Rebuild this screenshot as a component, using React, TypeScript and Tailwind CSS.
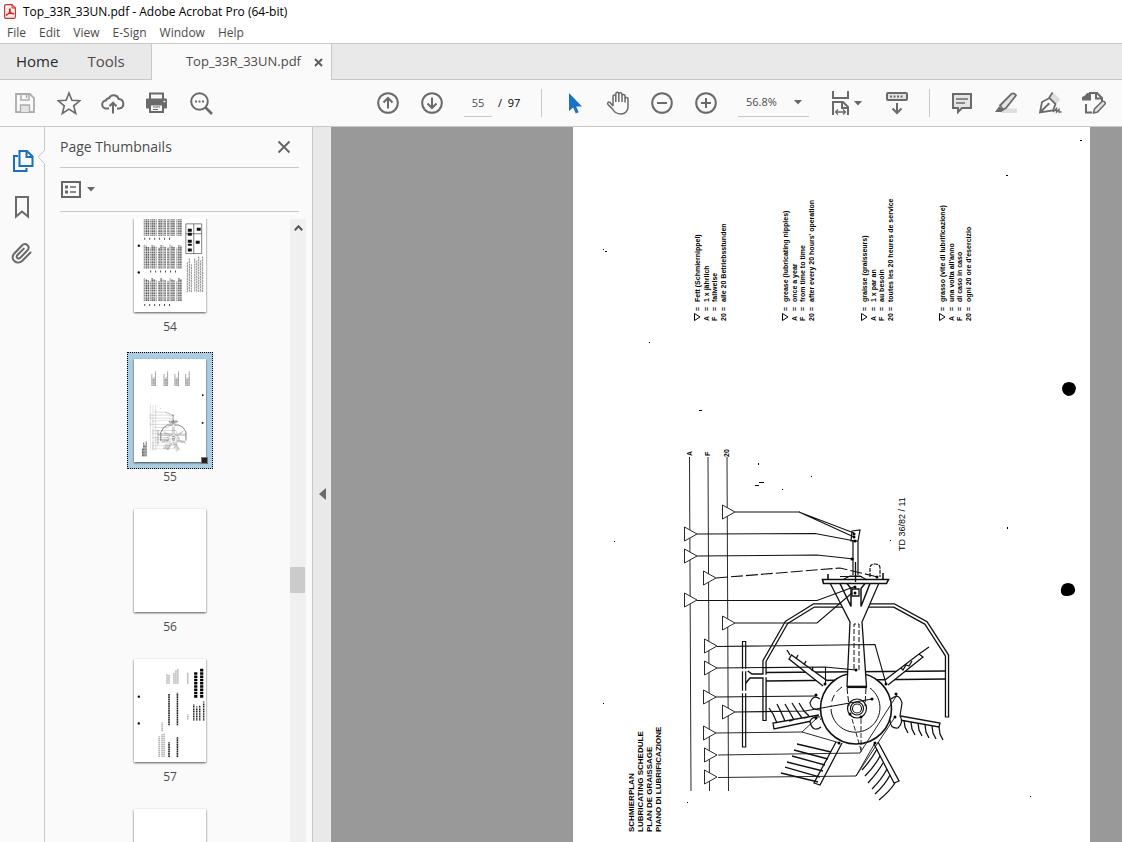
import React from "react";
import clsx from "clsx";

const MENUS = ["File", "Edit", "View", "E-Sign", "Window", "Help"];

// [left edge, centre] of every grease mark on the A / F / 20 lines
const MARKS = [
  [722, 512], [684, 534], [684, 556], [703, 578], [684, 600], [722, 623], [704, 646],
  [704, 668], [703, 697], [722, 712], [703, 733], [704, 755], [704, 777],
];

const LEGENDS = [
  { x: 700, lines: ["Fett (Schmiernippel)", "1 x jährlich", "fallweise", "alle 20 Betriebsstunden"] },
  { x: 788, lines: ["grease (lubricating nipples)", "once a year", "from time to time", "after every 20 hours' operation"] },
  { x: 867, lines: ["graisse (graisseurs)", "1 x par an", "au besoin", "toutes les 20 heures de service"] },
  { x: 945, lines: ["grasso (vite di lubrificazione)", "una volta all'anno", "di caso in caso", "ogni 20 ore d'esercizio"] },
];

const TITLES = ["SCHMIERPLAN", "LUBRICATING SCHEDULE", "PLAN DE GRAISSAGE", "PIANO DI LUBRIFICAZIONE"];

export default function App() {
  return (
    <div className="flex h-screen flex-col overflow-hidden bg-[#fafafa] font-['Open_Sans','Noto_Sans',sans-serif] text-[#4b4b4b] select-none">
      <TitleBar />
      <TabBar />
      <Toolbar />
      <div className="flex min-h-0 flex-1">
        <NavRail />
        <ThumbnailPanel />
        <button aria-label="Collapse panel" className="flex w-[19px] shrink-0 items-center justify-center border-l border-[#c8c8c8] bg-[#e9e9e9] pt-[18px]">
          <svg width="7" height="12" viewBox="0 0 7 12" fill="#6b6b6b"><path d="M7 0v12L0 6z" /></svg>
        </button>
        <main className="flex min-w-0 flex-1 justify-end overflow-hidden bg-[#999] pr-8">
          <article className="w-[517px] shrink-0 bg-white">
            <svg className="block w-full" viewBox="573 127 517 731">
              <PlanDrawing />
              <PlanText />
            </svg>
          </article>
        </main>
      </div>
    </div>
  );
}

function TitleBar() {
  return (
    <header className="shrink-0 bg-white">
      <div className="flex h-[22px] items-center gap-[7px] pt-px pl-1 text-xs text-black">
        <svg width="12" height="15" viewBox="0 0 12 15" fill="none">
          <path d="M.6 2Q.6.6 2 .6h6l3.400 3.400v9q0 1.400-1.400 1.400H2Q.6 14.400.6 13z" fill="#fff0ee" stroke="#c9302c" strokeWidth="1.1" />
          <path d="M8 .6V4h3.400" stroke="#c9302c" />
          <path d="M2.500 11.300c2-.8 4-4.500 3.700-6.300-.9-.6-1 1 0 2.600.9 1.600 2.600 2.500 3.500 2.300.4-1-4.500-.9-7.200.500z" stroke="#d8201c" strokeWidth="1.200" />
        </svg>
        <h1>Top_33R_33UN.pdf - Adobe Acrobat Pro (64-bit)</h1>
      </div>
      <nav className="flex h-[21px] items-center gap-[13px] pl-[7px] text-xs">
        {MENUS.map((m) => <button key={m}>{m}</button>)}
      </nav>
    </header>
  );
}

function TabBar() {
  return (
    <div className="flex h-[37px] shrink-0 border-t border-[#c8c8c8] bg-[#e9e9e9]">
      <div className="flex w-[152px] items-center gap-[29px] border-r border-b border-[#c8c8c8] pl-4 text-[15px]">
        <button className="text-[#2b2b2b]">Home</button>
        <button>Tools</button>
      </div>
      <div className="flex w-[179px] items-center justify-end gap-[13px] bg-[#fafafa] pr-2">
        <button className="text-[13px]">Top_33R_33UN.pdf</button>
        <button aria-label="Close tab">
          <svg width="9" height="9" viewBox="0 0 9 9" stroke="#5f5f5f" strokeWidth="2"><path d="M1 1l7 7M8 1L1 8" /></svg>
        </button>
      </div>
      <div className="flex-1 border-b border-l border-[#c8c8c8]" />
    </div>
  );
}

function Caret({ className }: { className?: string }) {
  return <svg className={className} width="8" height="5" viewBox="0 0 8 5" fill="#666"><path d="M0 0h8L4 4.500z" /></svg>;
}

function ToolButton({ label, width = "w-11", faded = false, children }: { label: string; width?: string; faded?: boolean; children: React.ReactNode }) {
  return (
    <button aria-label={label} className={clsx("flex h-11 shrink-0 items-center justify-center", width, faded ? "text-[#acacac]" : "text-[#6a6a6a]")}>
      <svg width="24" height="24" viewBox="0 0 24 24" fill="none" stroke="currentColor" strokeWidth="2">{children}</svg>
    </button>
  );
}

function Toolbar() {
  return (
    <div className="flex h-[47px] shrink-0 items-center overflow-hidden border-b border-[#c8c8c8] pl-[3px] text-xs">
      <ToolButton label="Save" faded>
        <path d="M3 3h14l4 4v14H3z" strokeWidth="1.800" />
        <path d="M8 3v6h8V3M13.500 4v3" strokeWidth="1.500" />
        <path d="M7.500 21v-7h9v7" strokeWidth="1.300" fill="#e4e4e4" />
      </ToolButton>
      <ToolButton label="Star">
        <path d="M12 2l2.900 7.300 7.900.5-6.100 5 2 7.700L12 18.200l-6.700 4.300 2-7.700-6.100-5 7.900-.5z" strokeWidth="1.600" />
      </ToolButton>
      <ToolButton label="Share file">
        <path d="M8 17.500H5.500a4 4 0 0 1-.6-8A3.200 3.200 0 0 1 8 7.200 5.200 5.200 0 0 1 17.700 8a4.800 4.800 0 0 1 .8 9.500H16" />
        <path d="M12 22.500V12M8.500 15.200L12 11.700l3.500 3.500" />
      </ToolButton>
      <ToolButton label="Print">
        <path d="M4 1.500h15v6H4zM2 7.500h19q1 0 1 1v8q0 1-1 1H2q-1 0-1-1v-8q0-1 1-1z" fill="currentColor" stroke="none" />
        <path d="M6 3.500h11v4H6z" fill="#fafafa" stroke="none" />
        <path d="M5 13.500h13v7.500H5z" fill="#fafafa" />
        <path d="M8 16h7M8 18.500h5" strokeWidth="1" />
        <path d="M18.500 10.500h2" stroke="#fafafa" strokeWidth="1.200" />
      </ToolButton>
      <ToolButton label="Find">
        <circle cx="10.500" cy="10.500" r="8.300" /><path d="M16.500 16.500l6.500 6.500" strokeWidth="2.600" />
        <path d="M6 10.500h2M9.500 10.500h2M13 10.500h2" />
      </ToolButton>
      <div className="w-[143px] shrink-0" />
      <ToolButton label="Previous page">
        <circle cx="12" cy="12" r="9.800" /><path d="M12 17.500V7M7.500 11.500L12 7l4.500 4.500" />
      </ToolButton>
      <ToolButton label="Next page">
        <circle cx="12" cy="12" r="9.800" /><path d="M12 6.500V17M7.500 12.500L12 17l4.500-4.500" />
      </ToolButton>
      <input aria-label="Page number" defaultValue="55" className="ml-[10px] h-[27px] w-7 shrink-0 border-b border-[#c8c8c8] bg-transparent text-center text-[11px] outline-none" />
      <span className="ml-[6px] w-[43px] shrink-0 text-[11px] whitespace-pre text-black">/  97</span>
      <Divider />
      <ToolButton label="Select">
        <path d="M7 2v18l4.200-3.500 2.500 6 3-1.300-2.500-5.700H20z" fill="#1b72c4" stroke="none" />
      </ToolButton>
      <ToolButton label="Pan">
        <path d="M7 15V5.500c0-2 2.800-2 2.800 0V11M9.800 6V3c0-2.200 3-2.200 3 0v8M12.800 3.500c0-2.200 3.200-2.200 3.200 0V11M16 5c0-2 3-2 3 0v6.500M19 8c0-2 3-2 3 0v8c0 4-3 7-7 7-4.500 0-6.500-1.500-8.500-5L2 13.500c-1.200-2 .8-3.200 2-2L7 15" strokeWidth="1.500" />
      </ToolButton>
      <ToolButton label="Zoom out"><circle cx="12" cy="12" r="9.800" /><path d="M7 12h10" /></ToolButton>
      <ToolButton label="Zoom in"><circle cx="12" cy="12" r="9.800" /><path d="M7 12h10M12 7v10" /></ToolButton>
      <div className="ml-[10px] flex h-[27px] w-[71px] shrink-0 items-center border-b border-[#c8c8c8] pl-2">
        <select aria-label="Zoom level" className="min-w-0 flex-1 appearance-none bg-transparent text-[11px] outline-none">
          <option>56.8%</option>
        </select>
        <Caret className="mr-[7px]" />
      </div>
      <button aria-label="Page fit" className="ml-5 flex h-11 w-[34px] shrink-0 items-center gap-px">
        <svg width="24" height="24" viewBox="0 0 24 24" fill="none" stroke="#6a6a6a" strokeWidth="2">
          <path d="M4 0v7h15V0" />
          <path d="M4 24V11h10l5 5v8M13 11v6h6" />
          <path d="M7 21h9M9 18.500L6.500 21 9 23.500M14 18.500l2.500 2.500-2.500 2.500" strokeWidth="1.300" />
        </svg>
        <Caret />
      </button>
      <ToolButton label="Read mode" width="ml-3 w-11">
        <rect x="2" y="2" width="20" height="7" rx="1" fill="#e4e4e4" />
        <path d="M5 5.500h2M8.500 5.500h2M12 5.500h2M15.500 5.500h2" />
        <path d="M12 12v10M7.500 17.500L12 22l4.500-4.500" />
      </ToolButton>
      <div className="w-[10px] shrink-0" />
      <Divider />
      <ToolButton label="Comment">
        <path d="M3 3h18v14h-9l-4 4v-4H3z" fill="#e4e4e4" /><path d="M6 8h12M6 12h9" strokeWidth="1.300" />
      </ToolButton>
      <ToolButton label="Highlight">
        <path d="M11 17.500h12V22H7z" fill="#dedede" stroke="none" />
        <path d="M6 14.500L17.500 2.800q3-1.200 4.500 1.700L12 17l-3 1.500z" fill="#e4e4e4" strokeWidth="1.800" />
        <path d="M5 15.500l4.500 4L7.500 21H1z" fill="currentColor" stroke="none" />
      </ToolButton>
      <ToolButton label="Sign">
        <path d="M12 6l3-5 7.500 7.500-4.500 4.500z" fill="#dedede" stroke="none" />
        <path d="M2 21.500L4 11l7.500-4 6 6-2.500 6.500zM2 21.500l8-8M11 7l3.500-5.500" strokeWidth="1.800" />
        <circle cx="10.500" cy="13" r="1.200" fill="currentColor" stroke="none" />
        <path d="M15 21l3.500-3.500v3.500l2.500-2.500V21h2.500" strokeWidth="1.400" />
      </ToolButton>
      <ToolButton label="Edit">
        <path d="M7 2h8l5 5v3.500M14 2v5.500h6M4 13v8.500h6" />
        <path d="M0 6l3-1.500L5 2h4v7.500H0z" fill="currentColor" stroke="none" />
        <path d="M11.500 22l1-4 8-8q2.500.3 3 2.500l-8 8.500z" fill="#e4e4e4" strokeWidth="1.500" />
      </ToolButton>
    </div>
  );
}

function Divider() {
  return <div className="mr-[10px] h-7 w-px shrink-0 bg-[#c8c8c8]" />;
}

function NavRail() {
  return (
    <nav className="flex w-[45px] shrink-0 flex-col border-r border-[#c8c8c8] pt-[10px]">
      <button aria-label="Page Thumbnails" className="relative flex h-[47px] items-center pl-[11px]">
        <svg width="24" height="24" viewBox="0 0 24 24" fill="none" stroke="#1b6fc0" strokeWidth="2">
          <path d="M8.500 2h7.500l5.500 5.500V17h-13zM15.500 2v6h6" /><path d="M7 7H3v15h12.500v-3" />
        </svg>
        <svg className="absolute top-3 -right-px" width="8" height="16" viewBox="0 0 8 16" fill="#fafafa" stroke="#c8c8c8">
          <path d="M8 1L1 8l7 7" />
        </svg>
      </button>
      <button aria-label="Bookmarks" className="flex h-[46px] items-center pl-[10px]">
        <svg width="24" height="24" viewBox="0 0 24 24" fill="none" stroke="#6a6a6a" strokeWidth="2"><path d="M6 2h12v19.500l-6-5-6 5z" /></svg>
      </button>
      <button aria-label="Attachments" className="flex h-[46px] items-center pl-[10px]">
        <svg width="24" height="24" viewBox="0 0 24 24" fill="none" stroke="#6a6a6a" strokeWidth="2" strokeLinecap="round">
          <path d="M20.500 11.500l-8.200 8.200c-5 5-13-1.500-8.200-7l7.600-8c4-4.200 9 .8 5.800 4.600l-7 7.200c-2.500 2.400-5-.3-3-2.500l6.300-6.400" />
        </svg>
      </button>
    </nav>
  );
}

function ThumbnailPanel() {
  return (
    <aside className="flex w-[267px] shrink-0 flex-col">
      <div className="mr-[13px] ml-[15px] flex h-[41px] shrink-0 items-center justify-between border-b border-[#c8c8c8] pr-2">
        <h2 className="text-sm">Page Thumbnails</h2>
        <button aria-label="Close panel">
          <svg width="14" height="14" viewBox="0 0 14 14" stroke="#666" strokeWidth="2"><path d="M1.500 1.500l11 11M12.500 1.500l-11 11" /></svg>
        </button>
      </div>
      <div className="mr-[13px] ml-[15px] flex h-11 shrink-0 items-center border-b border-[#c8c8c8]">
        <button aria-label="Options" className="flex items-center gap-[6px]">
          <svg width="21" height="17" viewBox="0 0 21 17" fill="none" stroke="#666" strokeWidth="2">
            <path d="M2 1h18v15H2z" />
            <path d="M10 6h6M10 11h6" strokeWidth="1.500" /><path d="M5 6h3M5 11h3" strokeWidth="3" />
          </svg>
          <Caret />
        </button>
      </div>
      <div className="mt-[7px] flex min-h-0 flex-1 overflow-hidden">
        <ol className="-mt-[17px] flex flex-1 flex-col items-center gap-4 pl-[5px]">
          <Thumbnail page={54}><TextPage /></Thumbnail>
          <Thumbnail page={55} selected>
            <svg className="size-full" viewBox="573 127 517 746">
              <PlanDrawing />
              <g stroke="#333" strokeWidth="4" strokeDasharray="9 2">
                {LEGENDS.map((l) => <path key={l.x} d={`M${l.x} 322v-85M${l.x + 9} 322v-55M${l.x + 17} 322v-60M${l.x + 26} 322v-105`} />)}
                <path d="M632 832v-57M641 832v-101M650 832v-83M659 832v-108" strokeWidth="6" />
              </g>
            </svg>
          </Thumbnail>
          <Thumbnail page={56} />
          <Thumbnail page={57}><CoverPage /></Thumbnail>
          <Thumbnail page={58} captioned={false} />
        </ol>
        <div className="mr-[6px] flex w-4 shrink-0 flex-col bg-[#f0f0f0]">
          <button aria-label="Scroll up" className="flex h-[18px] shrink-0 items-center justify-center">
            <svg width="9" height="6" viewBox="0 0 9 6" fill="none" stroke="#555" strokeWidth="2"><path d="M.8 5.300l3.700-4 3.700 4" /></svg>
          </button>
          <div className="h-[330px] shrink-0" />
          <div className="h-[26px] w-[15px] shrink-0 bg-[#cbcbcb]" />
        </div>
      </div>
    </aside>
  );
}

interface ThumbnailProps {
  page: number;
  selected?: boolean;
  captioned?: boolean;
  children?: React.ReactNode;
}

function Thumbnail({ page, selected = false, captioned = true, children }: ThumbnailProps) {
  return (
    <li className="flex shrink-0 flex-col items-center">
      <button
        aria-label={`Page ${page}`}
        className={clsx("flex h-[117px] w-[86px] items-start justify-center border pt-[6px]", selected ? "border-dotted border-black bg-[#abcde3]" : "border-transparent")}
      >
        <span className="relative block h-[103px] w-[72px] bg-white shadow-[0_1px_2px_rgba(0,0,0,0.65)]">
          {children}
          {selected && <span className="absolute -right-[2px] -bottom-[2px] size-[7px] border border-[#777] bg-[#222]" />}
        </span>
      </button>
      {captioned && <span className="h-[17px] text-xs leading-4">{page}</span>}
    </li>
  );
}

// page 54: three bands of dense columns and a pictogram table
function TextPage() {
  const bands = [[0, 27], [36, 60], [70, 93]];
  return (
    <svg className="block size-full" viewBox="0 0 72 104">
      <g stroke="#4a4a4a" fill="none">
        {bands.map(([a, b]) =>
          [10, 12, 14, 16, 18, 20, 22, 25, 27, 29, 31, 34, 36, 38, 40, 43, 45, 47].map((x, i) => (
            <path key={`${a}-${x}`} d={`M${x} ${b}V${a + (i % 4)}`} strokeWidth={i % 3 ? 1.3 : 0.8} strokeDasharray="1.3 .4" />
          )),
        )}
        <path d="M10 30h30M16 63h30M10 97h28" strokeDasharray="1 4" strokeWidth="2" />
        <path d="M53.500 54v30M55.500 50v34M57.500 56v28M61 50v34M63 52v32M65 48v36M67 52v32M69 48v36" strokeWidth=".7" strokeDasharray="2 .6" />
        <path d="M52 15h16v30H52zM60 15v30M52 25h16" strokeWidth=".7" />
        <path d="M56 20v7M56 31v6M56 40v4M64 32v4M65 19v4" stroke="#111" strokeWidth="4" strokeDasharray="3 1" />
      </g>
      <circle cx="4.500" cy="37" r="1.200" /><circle cx="4.500" cy="64" r="1.200" />
    </svg>
  );
}

function CoverPage() {
  return (
    <svg className="block size-full" viewBox="0 0 72 104" fill="none" stroke="#222">
      <path d="M62 39V13M68 39V9" strokeWidth="3.200" strokeDasharray="2.600 .7" stroke="#000" />
      <path d="M60 62V46M63 62V48M66 62V47M70 62V43" strokeWidth="1.500" strokeDasharray="1.200 .5" />
      <path d="M35 99V84M43.500 99V79M35 67V35M43.500 67V34" strokeWidth="1.600" strokeDasharray="1.800 .5" />
      <path d="M25 99V78M28 99V76M30 99V75M28 73V64M33 25V15M35 25V16M40 25V14M42 25V11M44 25V10M54 25V14M54 61v-5" stroke="#666" strokeWidth=".8" strokeDasharray="1.500 .5" />
      <g fill="#000" stroke="none"><circle cx="4.500" cy="38" r="1.200" /><circle cx="4.500" cy="65" r="1.200" /></g>
    </svg>
  );
}

function PlanText() {
  return (
    <g fill="#000" className="font-['Liberation_Sans',sans-serif]">
      <g className="text-[7px] font-bold">
        {LEGENDS.map((legend) =>
          legend.lines.map((line, i) => (
            <g key={line} transform={`translate(${legend.x + i * 9 - (i > 1 ? 1 : 0)} 321) rotate(-90)`}>
              {i === 0 ? <path d="M.5-5.500h7L4 0z" fill="none" stroke="#000" /> : <text>{["", "A", "F", "20"][i]}</text>}
              <text x="10">=</text>
              <text x="19">{line}</text>
            </g>
          )),
        )}
        <text transform="translate(692 456) rotate(-90)">A</text>
        <text transform="translate(710 456) rotate(-90)">F</text>
        <text transform="translate(729 457) rotate(-90)">20</text>
      </g>
      <g className="text-[8px] font-bold">
        {TITLES.map((t, i) => <text key={t} transform={`translate(${634 + i * 9} 832) rotate(-90)`}>{t}</text>)}
      </g>
      <text className="text-[9px]" transform="translate(905 551) rotate(-90)">TD 36/82 / 11</text>
    </g>
  );
}

function PlanDrawing() {
  return (
    <g fill="none" stroke="#111">
      {/* schedule lines */}
      <path d="M689.500 457L691 791M708 457l1.500 334M727 457l1.500 334" strokeWidth=".9" />

      {/* frame */}
      <path d="M764.500 721v-60l22-38.500 27.500-17h80l32 17.500 21 32.500v62" strokeWidth="4.400" />
      <path d="M764.500 720v-59l22-38.500 27.500-17h80l32 17.500 21 32.500v61" stroke="#fff" strokeWidth="1.800" />
      <path d="M766 672.500L946 671M766 681l180-2M745 669l7 5h11M745 684l5-6h13" strokeWidth="1.500" />
      <path d="M742.500 641.500h3.200V747h-3.200z" fill="#fff" strokeWidth="1.200" />
      <path d="M741 692h7M762 676h6M741 670h7" stroke="#fff" strokeWidth="2.500" />

      {/* tine arms */}
      <g strokeWidth="1.300">
        <path d="M823 686l-34-27 2.500-4 36 26M790 655l-3-5M796 659l2-4M804 665l2-4M812 671l1-4" fill="#fff" />
        <path d="M885 680l34-26 4 3-35 28M919 654l10-7M901 668l2 2 3-5 3 1 3-5" fill="#fff" />
        <path d="M819 715l-46 8 1 6 47-10M789 721l4-1M804 718l4-1" fill="#fff" />
        <path d="M769 708l4 6 4 9M777 704l4 8 4 9M785 704l4 7 5 9M792 703l5 8 5 7M799 703l5 8 5 5" />
        <path d="M895 715l45 8-1 4-45-8" fill="#fff" />
        <path d="M904 720l1 7 3 6M911 722l1 7 3 6M918 723l1 7 3 6M925 725l1 7 3 6M932 726l1 7 3 6M939 727l1 7 3 6" />
        <path d="M836 742l-22 41 6 2 22-42" fill="#fff" />
        <path d="M797 744l34 8M794 750l34 9M792 756l33 9M787 762l36 9M785 767l35 10M781 773l37 9" />
        <path d="M874 744l20 39 5-2-21-39" fill="#fff" />
        <path d="M877 749q-5 10-15 21M880 756q-5 10-15 20M883 763q-5 9-15 20M887 769q-5 10-15 20M890 775q-5 10-15 19M895 783q-5 8-16 17" />
      </g>
      <path d="M820 699q-7-5-10 4 1 7 10 7M820 717q-9-1-10 5 3 11 11 5" fill="#fff" strokeWidth="1.200" />
      <path d="M891 699q8-7 11 4l-2 13q4 6-2 12-8 1-8-8" fill="#fff" strokeWidth="1.200" />

      {/* rotor */}
      <circle cx="856" cy="708.500" r="35.500" fill="#fff" strokeWidth="1.600" />
      <path d="M847 686.500L850 622l-20-39h49l-17 39 4.500 64.500z" fill="#fff" strokeWidth="1.300" />
      <path d="M840 583.500l11 23v-18l-4-5M870 583.500l-9 23v-18l4-5" strokeWidth="1.500" />
      <path d="M854 669v-45h5v46" strokeDasharray="5 2" />
      <path d="M847 687h20" strokeWidth="2.200" />
      <path d="M842 687A24.500 24.500 0 0 0 831 707" strokeDasharray="7 4" />
      <path d="M831 709A24.500 24.500 0 1 0 870 688" />
      <path d="M847 688l2 18M866 688l-1 18" strokeDasharray="6 2" />
      <circle cx="857" cy="708.500" r="9.500" strokeWidth="1.200" />
      <circle cx="857" cy="708.500" r="6.500" fill="#fff" strokeWidth="1.200" />
      <circle cx="857" cy="708.500" r="4.500" strokeWidth="1.100" />
      <path d="M852 719l9 31M861 719v33" strokeWidth=".9" strokeDasharray="5 2" />

      {/* drawbar and hitch */}
      <path d="M822.500 579.500h66l-2 4h-63zM828 574v6M883 573v6" fill="#fff" strokeWidth="1.600" />
      <path d="M852 531l8-1-2 11h-7zM853 541v34M858 541v34M840 576.500h22M844 579l6-3h10l7 4" strokeWidth="1.200" />
      <path d="M870 577v-9q0-4 5-4t5 4v9" strokeDasharray="4 1" strokeWidth="1.200" />
      <path d="M852 589h7v7h-7zM855.500 562v20" fill="#fff" strokeWidth="1.300" />

      {/* leaders */}
      <g strokeWidth="1.100">
        <path d="M735 512h64l55 21M799 512l55 25M697 534l118-.5 40 7.500M697 556l120-1 37 4" />
        <path d="M716 578l124-10 38 9" strokeDasharray="12 3" />
        <path d="M697 600.500h120l38-14M735 623h82l35-30M717 646.500l158-2 11 39" />
        <path d="M717 668l108-1 31 3M825.500 667v17M716 697l100-1M735 712l70-1 67-12" />
        <path d="M716 733l86-1 15-14M802 732l38 11" strokeWidth=".9" />
        <path d="M718 755l142-2 37-58M718 777.500l138-1.500 39-59M856 776l19-33" strokeWidth=".9" />
      </g>
      <g fill="#fff" strokeWidth=".9">
        {MARKS.map(([x, y]) => <path key={y} d={`M${x + 0.5} ${y - 7}v14l12.500-7z`} />)}
      </g>
      <g fill="#000" stroke="none">
        {[[854, 534], [854, 537], [855, 541], [852, 559], [877, 577], [855, 587], [855, 593], [856, 670], [825, 684], [886, 684], [816, 695], [872, 699], [816, 718], [839, 743], [896, 694], [895, 717], [875, 743], [850, 714], [861, 717]].map(([cx, cy]) => (
          <circle key={`${cx}-${cy}`} cx={cx} cy={cy} r="1.500" />
        ))}
        {/* binder holes and scan specks */}
        <path d="M1062 388q1-6 7-6t7 6q-1 8-8 8-6-2-6-8zM1061 589q1-6 7-6t7 6-7 7-7-7z" />
        <path d="M1080 140h2v1h-2zM1006 175h2v1h-2zM758 463h1v2h-1zM755 485h4v1h-4zM759 482h5v1h-5zM782 489h1v1h-1zM811 476h1v1h-1zM699 410h3v1h-3zM890 540h1v1h-1zM1007 527h1v2h-1zM614 541h1v1h-1zM603 249h1v1h-1zM605 251h2v1h-2zM649 342h1v1h-1zM687 802h1v1h-1zM603 703h1v1h-1zM1030 796h1v1h-1z" />
      </g>
    </g>
  );
}
